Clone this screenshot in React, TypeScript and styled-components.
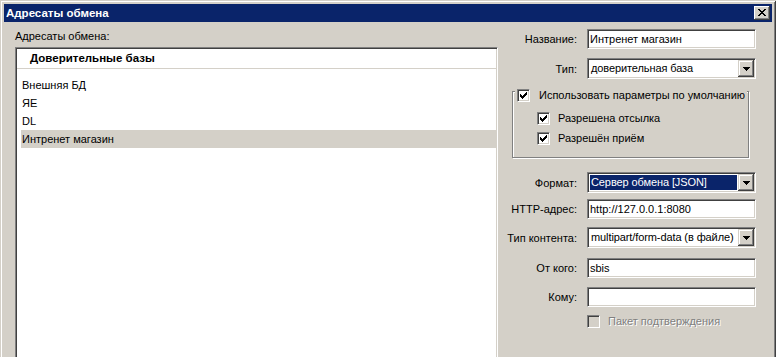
import styled, { createGlobalStyle } from "styled-components"

const GlobalStyle = createGlobalStyle`
  html, body {
    margin: 0;
    padding: 0;
    overflow: hidden;
    background: #d4d0c8;
  }
  body {
    font-family: "Liberation Sans", Arial, sans-serif;
    font-size: 11px;
    color: #000;
  }
`

const Window = styled.div`
  width: 776px;
  height: 380px;
  box-sizing: border-box;
  padding: 4px;
  background: #d4d0c8;
  box-shadow: inset 1px 1px 0 #d4d0c8, inset -1px -1px 0 #404040,
    inset 2px 2px 0 #fff, inset -2px -2px 0 #808080;
  display: flex;
  flex-direction: column;
`

const TitleBar = styled.div`
  height: 18px;
  flex-shrink: 0;
  background: #0a246a;
  color: #fff;
  font-weight: bold;
  font-size: 11.5px;
  display: flex;
  align-items: center;
  justify-content: space-between;
  padding: 0 2px;
`

const CloseButton = styled.div`
  width: 16px;
  height: 14px;
  box-sizing: border-box;
  background: #d4d0c8;
  box-shadow: inset -1px -1px 0 #404040, inset 1px 1px 0 #fff,
    inset -2px -2px 0 #808080;
  display: flex;
  align-items: center;
  justify-content: center;
  margin-top: -1px;
`

const Body = styled.div`
  flex: 1;
  min-height: 0;
  display: flex;
  gap: 2px;
  padding: 7px 16px 0 11px;
`

const LeftColumn = styled.div`
  width: 483px;
  display: flex;
  flex-direction: column;
`

const Caption = styled.div`
  margin-top: 1px;
  line-height: 13px;
`

const List = styled.div`
  flex: 1;
  margin-top: 4px;
  background: #fff;
  border: 1px solid;
  border-color: #808080 #fff #fff #808080;
  box-shadow: inset 1px 1px 0 #404040, inset -1px -1px 0 #d4d0c8;
  padding: 1px;
`

const ListHeader = styled.div`
  height: 19px;
  line-height: 19px;
  padding-left: 13px;
  font-weight: bold;
  font-size: 11.5px;
  border-bottom: 1px solid #d4d0c8;
`

const ListItems = styled.div`
  padding-top: 7px;
`

const ListRow = styled.div<{ $selected?: boolean }>`
  height: 18px;
  line-height: 18px;
  margin-left: 4px;
  padding-left: 1px;
  background: ${p => (p.$selected ? "#d4d0c8" : "transparent")};
`

const RightColumn = styled.div`
  width: 256px;
  display: flex;
  flex-direction: column;
`

const FieldRow = styled.div<{ $top: number }>`
  display: flex;
  align-items: center;
  gap: 10px;
  margin-top: ${p => p.$top}px;
`

const FieldLabel = styled.label`
  width: 77px;
  flex-shrink: 0;
  text-align: right;
  white-space: nowrap;
`

const TextBox = styled.input`
  width: 169px;
  height: 20px;
  box-sizing: border-box;
  margin: 0;
  padding: 0 0 0 2px;
  font: inherit;
  color: #000;
  background: #fff;
  border: 1px solid;
  border-color: #808080 #fff #fff #808080;
  box-shadow: inset 1px 1px 0 #404040, inset -1px -1px 0 #d4d0c8;
  outline: none;
`

const Combo = styled.div`
  width: 169px;
  height: 21px;
  flex-shrink: 0;
  box-sizing: border-box;
  background: #fff;
  border: 1px solid;
  border-color: #808080 #fff #fff #808080;
  box-shadow: inset 1px 1px 0 #404040, inset -1px -1px 0 #d4d0c8;
  padding: 1px;
  display: flex;
`

const ComboText = styled.div<{ $focused?: boolean }>`
  flex: 1;
  min-width: 0;
  margin: 1px;
  padding-left: 1px;
  line-height: 15px;
  white-space: nowrap;
  overflow: hidden;
  letter-spacing: -0.1px;
  background: ${p => (p.$focused ? "#0a246a" : "transparent")};
  color: ${p => (p.$focused ? "#fff" : "#000")};
`

const DropButton = styled.div`
  width: 16px;
  height: 17px;
  flex-shrink: 0;
  box-sizing: border-box;
  background: #d4d0c8;
  box-shadow: inset -1px -1px 0 #404040, inset 1px 1px 0 #d4d0c8,
    inset -2px -2px 0 #808080, inset 2px 2px 0 #fff;
  display: flex;
  align-items: center;
  justify-content: center;
`

const GroupBox = styled.div`
  margin: 12px 0 0 12px;
  width: 237px;
  box-sizing: border-box;
  border: 1px solid #808080;
  box-shadow: inset 1px 1px 0 #fff, 1px 1px 0 #fff;
  padding: 0 0 12px 24px;
`

const GroupHeader = styled.div`
  display: flex;
  align-items: center;
  gap: 9px;
  width: fit-content;
  margin: -3px 0 0 -22px;
  padding: 0 2px;
  background: #d4d0c8;
  white-space: nowrap;
`

const CheckRow = styled.div<{ $top: number }>`
  display: flex;
  align-items: center;
  gap: 8px;
  margin-top: ${p => p.$top}px;
`

const Box = styled.div<{ $disabled?: boolean }>`
  width: 13px;
  height: 13px;
  flex-shrink: 0;
  box-sizing: border-box;
  background: ${p => (p.$disabled ? "#d4d0c8" : "#fff")};
  border: 1px solid;
  border-color: #808080 #fff #fff #808080;
  box-shadow: inset 1px 1px 0 #404040, inset -1px -1px 0 #d4d0c8;
  display: flex;
  align-items: center;
  justify-content: center;
`

const CheckText = styled.span<{ $disabled?: boolean }>`
  line-height: 13px;
  color: ${p => (p.$disabled ? "#808080" : "#000")};
  text-shadow: ${p => (p.$disabled ? "1px 1px 0 #fff" : "none")};
`

const Check = ({ checked, disabled }: { checked?: boolean; disabled?: boolean }) => (
  <Box $disabled={disabled}>
    {checked && (
      <svg width="7" height="7" viewBox="0 0 7 7" shapeRendering="crispEdges">
        <path
          fill="#000"
          d="M6 0h1v1H6z M5 1h2v1H5z M0 2h1v1H0z M4 2h3v1H4z M0 3h2v1H0z M3 3h3v1H3z M0 4h5v1H0z M1 5h3v1H1z M2 6h1v1H2z"
        />
      </svg>
    )}
  </Box>
)

const Arrow = () => (
  <svg width="7" height="4" viewBox="0 0 7 4" shapeRendering="crispEdges">
    <path fill="#000" d="M0 0h7v1H0z M1 1h5v1H1z M2 2h3v1H2z M3 3h1v1H3z" />
  </svg>
)

const Select = ({ value, focused }: { value: string; focused?: boolean }) => (
  <Combo>
    <ComboText $focused={focused}>{value}</ComboText>
    <DropButton>
      <Arrow />
    </DropButton>
  </Combo>
)

const items = ["Внешняя БД", "ЯЕ", "DL", "Интренет магазин"]

export default function App() {
  return (
    <>
      <GlobalStyle />
      <Window>
        <TitleBar>
          <span>Адресаты обмена</span>
          <CloseButton>
            <svg width="8" height="7" viewBox="0 0 8 7" shapeRendering="crispEdges">
              <path
                fill="#000"
                d="M0 0h2v1H0z M6 0h2v1H6z M1 1h2v1H1z M5 1h2v1H5z M2 2h4v1H2z M3 3h2v1H3z M2 4h4v1H2z M1 5h2v1H1z M5 5h2v1H5z M0 6h2v1H0z M6 6h2v1H6z"
              />
            </svg>
          </CloseButton>
        </TitleBar>
        <Body>
          <LeftColumn>
            <Caption>Адресаты обмена:</Caption>
            <List>
              <ListHeader>Доверительные базы</ListHeader>
              <ListItems>
                {items.map((it, i) => (
                  <ListRow key={it} $selected={i === items.length - 1}>
                    {it}
                  </ListRow>
                ))}
              </ListItems>
            </List>
          </LeftColumn>
          <RightColumn>
            <FieldRow $top={0}>
              <FieldLabel>Название:</FieldLabel>
              <TextBox readOnly defaultValue="Интренет магазин" />
            </FieldRow>
            <FieldRow $top={9}>
              <FieldLabel>Тип:</FieldLabel>
              <Select value="доверительная база" />
            </FieldRow>
            <GroupBox>
              <GroupHeader>
                <Check checked />
                <CheckText>Использовать параметры по умолчанию</CheckText>
              </GroupHeader>
              <CheckRow $top={10}>
                <Check checked />
                <CheckText>Разрешена отсылка</CheckText>
              </CheckRow>
              <CheckRow $top={7}>
                <Check checked />
                <CheckText>Разрешён приём</CheckText>
              </CheckRow>
            </GroupBox>
            <FieldRow $top={14}>
              <FieldLabel>Формат:</FieldLabel>
              <Select value="Сервер обмена [JSON]" focused />
            </FieldRow>
            <FieldRow $top={6}>
              <FieldLabel>HTTP-адрес:</FieldLabel>
              <TextBox readOnly defaultValue="http://127.0.0.1:8080" />
            </FieldRow>
            <FieldRow $top={8}>
              <FieldLabel>Тип контента:</FieldLabel>
              <Select value="multipart/form-data (в файле)" />
            </FieldRow>
            <FieldRow $top={10}>
              <FieldLabel>От кого:</FieldLabel>
              <TextBox readOnly defaultValue="sbis" />
            </FieldRow>
            <FieldRow $top={9}>
              <FieldLabel>Кому:</FieldLabel>
              <TextBox readOnly defaultValue="" />
            </FieldRow>
            <FieldRow $top={8}>
              <FieldLabel />
              <CheckRow $top={0}>
                <Check disabled />
                <CheckText $disabled>Пакет подтверждения</CheckText>
              </CheckRow>
            </FieldRow>
          </RightColumn>
        </Body>
      </Window>
    </>
  )
}
